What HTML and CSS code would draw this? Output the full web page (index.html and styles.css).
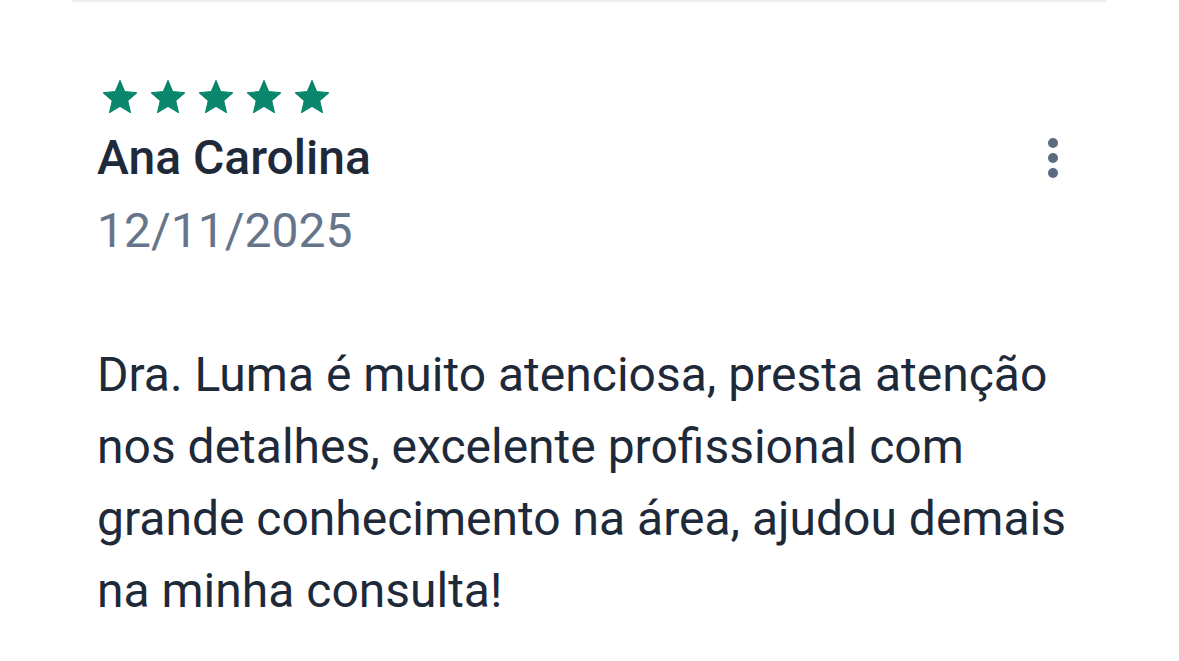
FILE: index.html
```html
<!DOCTYPE html>
<html lang="pt-BR">
<head>
  <meta charset="UTF-8">
  <title>Avaliação</title>
  <link rel="stylesheet" href="styles.css">
</head>
<body>
  <div class="review">
    <div class="stars">
      <svg viewBox="2 2 20 19"><path d="M12 17.27L18.18 21l-1.64-7.03L22 9.24l-7.19-.61L12 2 9.19 8.63 2 9.24l5.46 4.73L5.82 21z"/></svg>
      <svg viewBox="2 2 20 19"><path d="M12 17.27L18.18 21l-1.64-7.03L22 9.24l-7.19-.61L12 2 9.19 8.63 2 9.24l5.46 4.73L5.82 21z"/></svg>
      <svg viewBox="2 2 20 19"><path d="M12 17.27L18.18 21l-1.64-7.03L22 9.24l-7.19-.61L12 2 9.19 8.63 2 9.24l5.46 4.73L5.82 21z"/></svg>
      <svg viewBox="2 2 20 19"><path d="M12 17.27L18.18 21l-1.64-7.03L22 9.24l-7.19-.61L12 2 9.19 8.63 2 9.24l5.46 4.73L5.82 21z"/></svg>
      <svg viewBox="2 2 20 19"><path d="M12 17.27L18.18 21l-1.64-7.03L22 9.24l-7.19-.61L12 2 9.19 8.63 2 9.24l5.46 4.73L5.82 21z"/></svg>
    </div>

    <div class="head">
      <div class="name">Ana Carolina</div>
      <button class="menu" aria-label="Mais opções">
        <span></span><span></span><span></span>
      </button>
    </div>
    <div class="date">12/11/2025</div>

    <p class="text">Dra. Luma é muito atenciosa, presta atenção nos detalhes, excelente profissional com grande conhecimento na área, ajudou demais na minha consulta!</p>
  </div>
</body>
</html>
```

FILE: styles.css
```css
body {
  margin: 0;
  background-color: white;
  font-family: Roboto, "Liberation Sans", sans-serif;
}
.review {
  margin: 0 72px;
  padding: 78px 25px 0;
  border-top: 2px solid #eceef1;
}
.stars {
  display: flex;
  gap: 14px;
  margin-left: 6px;
}
.stars svg {
  width: 34px;
  height: 33px;
  fill: #0a876c;
  stroke: #0a876c;
  stroke-width: 0.6;
  stroke-linejoin: round;
}
.head {
  display: flex;
  justify-content: space-between;
  align-items: center;
  margin-top: 17px;
}
.name {
  font-size: 48px;
  line-height: 56px;
  font-weight: 500;
  color: #1e2939;
}
.menu {
  display: flex;
  flex-direction: column;
  gap: 5px;
  margin-right: 24px;
  padding: 0;
  border: none;
  background: none;
}
.menu span {
  width: 10px;
  height: 10px;
  border-radius: 50%;
  background-color: #5b6b80;
}
.date {
  margin-top: 17px;
  font-size: 48px;
  line-height: 56px;
  color: #66758a;
}
.text {
  margin: 80px 0 0;
  font-size: 48px;
  line-height: 72px;
  color: #1e2939;
}
```
